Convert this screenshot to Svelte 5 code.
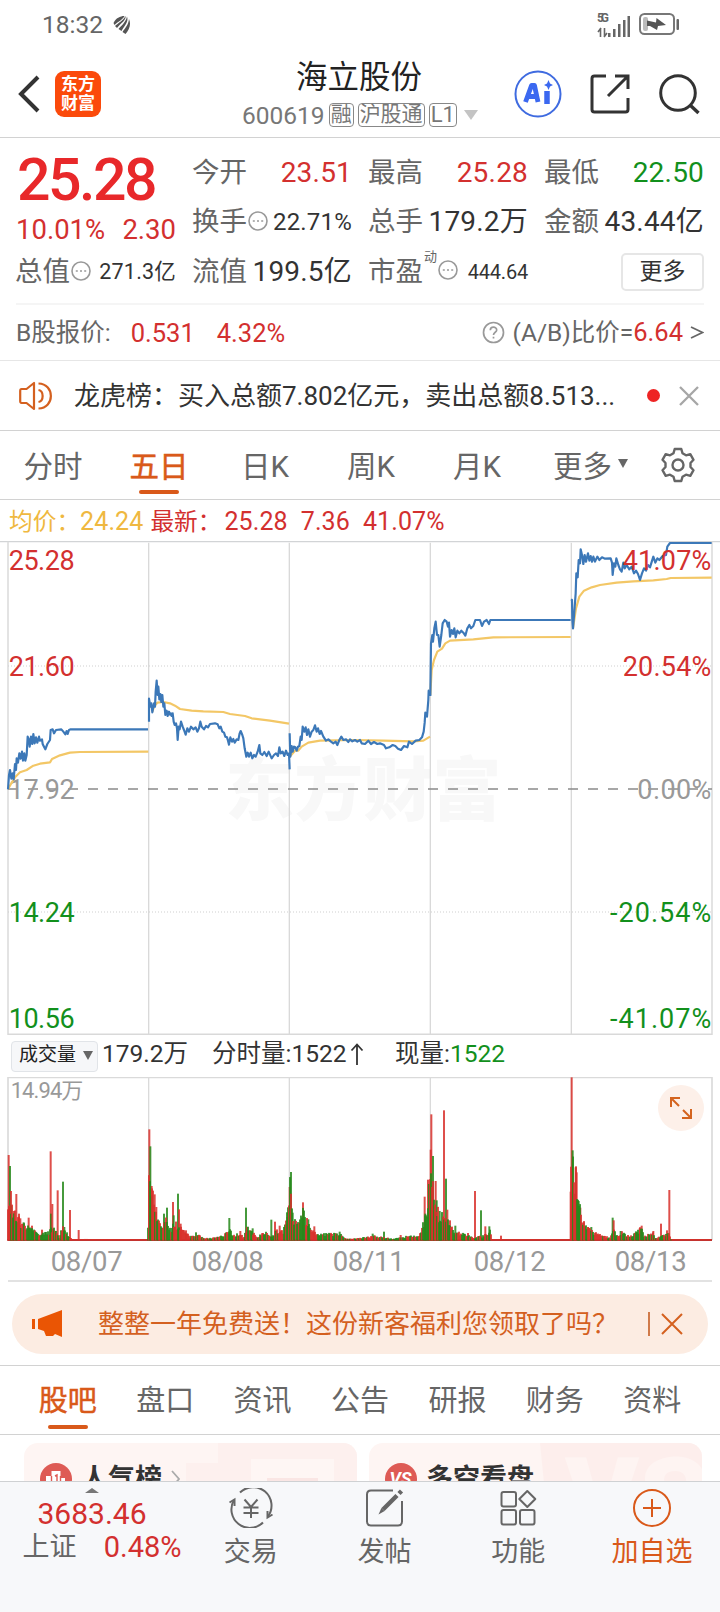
<script>
    // Шапка котировки
    const stats = [
        { label: "今开", value: "23.51", tone: "red" },
        { label: "最高", value: "25.28", tone: "red" },
        { label: "最低", value: "22.50", tone: "green" },
        { label: "换手", value: "22.71%", tip: true, size: "mid" },
        { label: "总手", value: "179.2万" },
        { label: "金额", value: "43.44亿" },
        { label: "流值", value: "199.5亿" },
        { label: "市盈", sup: "动", value: "444.64", tip: true, size: "small" },
    ];

    const periods = ["分时", "五日", "日K", "周K", "月K"];
    let period = "五日";

    const sections = ["股吧", "盘口", "资讯", "公告", "研报", "财务", "资料"];
    let section = "股吧";

    const dates = ["08/07", "08/08", "08/11", "08/12", "08/13"];

    let noticeOpen = true;
    let promoOpen = true;

    // Линии графика: координаты в третях пикселя
    const priceLines = [
        "24,748 27,705 30,690 34,716 38,700 41,718 45,672 48,690 50,655 54,668 58,640 62,656 66,635 69,662 73,640 76,662 80,645 83,590 87,600 89,620 93,590 97,612 100,582 104,610 108,592 112,608 117,590 120,602 126,598 128,612 132,620 136,628 142,612 150,600 152,570 158,568 162,580 168,570 184,568 190,575 196,583 200,573 203,582 207,570 212,568 444,568",
        "447,545 447,476 451,500 454,490 457,517 462,490 465,500 467,455 470,422 473,465 475,440 478,478 481,462 484,486 487,465 490,500 493,490 496,525 500,512 503,528 507,515 510,524 513,520 515,528 518,520 521,545 524,555 528,550 531,565 533,600 536,560 539,568 543,545 548,560 552,570 557,584 562,565 567,575 573,560 580,568 587,562 592,575 597,565 601,545 605,560 612,568 618,558 624,562 630,552 645,550 653,553 658,565 662,560 667,575 672,578 676,590 681,592 684,602 687,614 691,592 696,605 700,597 704,608 710,598 715,600 719,580 722,573 727,585 730,595 734,625 739,650 743,638 747,650 752,638 757,655 762,645 767,650 773,635 778,615 781,640 787,645 793,636 800,648 806,635 815,655 822,645 828,640 834,648 838,622 842,640 848,635 853,648 858,632 863,645 867,640 869,688",
        "869,580 871,650 875,618 878,635 882,620 886,622 890,632 894,620 898,618 902,590 905,600 908,560 913,575 917,562 921,585 925,568 930,590 935,575 940,570 945,556 950,575 954,565 959,582 963,573 970,590 978,602 985,598 992,604 1000,610 1007,605 1012,615 1018,600 1024,590 1030,600 1038,598 1045,606 1050,598 1057,604 1065,600 1072,605 1080,600 1085,610 1095,612 1105,602 1113,612 1122,606 1132,612 1140,610 1152,615 1158,625 1168,622 1178,615 1186,618 1194,626 1203,630 1212,618 1222,622 1227,605 1236,612 1247,602 1258,600 1266,592 1271,575 1274,548 1276,518 1281,530 1285,480 1286,452 1290,468",
        "1291,468 1293,310 1297,285 1299,305 1303,265 1307,245 1311,285 1315,285 1319,320 1324,285 1328,250 1334,240 1340,245 1344,260 1347,248 1350,290 1355,270 1359,282 1363,265 1367,292 1372,272 1378,280 1384,272 1390,278 1396,287 1402,265 1408,255 1413,265 1420,258 1426,240 1440,240 1446,258 1452,245 1460,240 1467,252 1471,240 1712,240",
        "1713,178 1716,180 1717,240 1719,265 1723,215 1727,160 1729,100 1733,112 1736,60 1740,70 1742,28 1746,45 1750,72 1754,45 1758,65 1764,40 1768,62 1772,48 1776,65 1780,50 1785,65 1792,50 1798,60 1806,52 1815,56 1832,55 1836,68 1838,105 1842,70 1846,80 1849,55 1855,75 1860,88 1865,95 1870,68 1874,85 1880,75 1888,88 1895,80 1902,100 1908,92 1914,102 1920,120 1926,100 1932,85 1938,92 1944,75 1950,82 1960,50 1966,68 1972,55 1978,60 1988,48 1998,45 2002,20 2010,9 2135,9",
    ];
    const avgLines = [
        "24,748 34,730 45,712 60,697 80,690 100,677 120,671 150,667 156,657 180,646 210,638 240,636 445,635",
        "457,515 463,498 472,488 490,486 510,490 525,497 540,507 575,512 610,514 670,516 690,522 735,528 755,535 810,542 867,551",
        "869,650 885,632 895,632 905,620 925,608 960,602 1060,600 1150,602 1240,604 1270,602 1290,590",
        "1291,465 1295,390 1302,360 1312,335 1326,326 1336,310 1350,302 1420,298 1480,292 1712,291",
        "1719,265 1728,205 1738,170 1752,152 1775,142 1800,135 1850,128 1900,124 1960,121 2000,117 2012,114 2135,113",
    ];
    const dayLines = [446, 868, 1291, 1714];

    const leftScale = [
        { text: "25.28", y: 90, tone: "red" },
        { text: "21.60", y: 407, tone: "red" },
        { text: "17.92", y: 776, tone: "gray" },
        { text: "14.24", y: 1145, tone: "green" },
        { text: "10.56", y: 1463, tone: "green" },
    ];
    const rightScale = [
        { text: "41.07%", y: 90, tone: "red", w: 266 },
        { text: "20.54%", y: 407, tone: "red", w: 266 },
        { text: "0.00%", y: 776, tone: "gray", w: 222 },
        { text: "-20.54%", y: 1145, tone: "green", w: 304 },
        { text: "-41.07%", y: 1463, tone: "green", w: 304 },
    ];

    // Огибающая мелкого объёма: [x, высота]
    const envelope = [
        [24, 90], [34, 100], [50, 85], [66, 55], [90, 38], [115, 22], [148, 26], [153, 40], [170, 32], [178, 4], [186, 45], [205, 18], [215, 4], [443, 3],
        [447, 200], [458, 150], [470, 85], [482, 48], [500, 75], [506, 30], [525, 55], [545, 35], [570, 14], [600, 16], [612, 6], [655, 10], [672, 18], [690, 38], [700, 16], [722, 24], [730, 6], [742, 42], [770, 12], [800, 26], [815, 10], [830, 35], [850, 30], [860, 80],
        [869, 190], [880, 75], [895, 50], [910, 95], [925, 50], [950, 20], [985, 22], [1020, 20], [1040, 5], [1070, 6], [1120, 14], [1180, 5], [1225, 14], [1258, 14], [1270, 60], [1284, 100],
        [1292, 260], [1302, 160], [1316, 80], [1330, 90], [1345, 60], [1362, 28], [1400, 18], [1420, 8], [1446, 14], [1470, 30], [1476, 3], [1710, 3],
        [1714, 270], [1733, 180], [1742, 80], [1760, 42], [1790, 22], [1830, 8], [1842, 40], [1850, 14], [1866, 26], [1890, 12], [1925, 40], [1932, 12], [1960, 25], [1966, 6], [2005, 24], [2014, 3], [2134, 3],
    ];
    // Крупные столбцы: [x, высота, цвет]
    const peaks = [
        [26, 256, "r"], [30, 223, "g"], [33, 148, "r"], [34, 104, "g"], [42, 88, "r"], [49, 139, "r"], [57, 80, "r"], [61, 66, "r"], [71, 54, "g"], [86, 68, "r"], [96, 44, "r"], [126, 32, "r"],
        [152, 267, "r"], [153, 80, "g"], [157, 109, "r"], [173, 150, "r"], [189, 176, "g"], [193, 40, "g"], [210, 91, "r"], [236, 31, "r"],
        [448, 333, "r"], [451, 282, "g"], [455, 163, "r"], [457, 135, "g"], [464, 138, "r"], [469, 100, "r"], [492, 80, "g"], [501, 98, "g"], [519, 115, "r"], [521, 75, "g"], [534, 140, "g"], [537, 93, "r"], [542, 50, "r"], [558, 30, "r"],
        [588, 24, "g"], [688, 67, "g"], [721, 28, "r"], [738, 98, "g"], [741, 40, "r"], [758, 36, "g"], [789, 22, "r"], [814, 62, "g"], [825, 56, "r"], [839, 44, "r"], [857, 48, "r"], [862, 70, "r"],
        [869, 160, "r"], [873, 205, "g"], [878, 83, "g"], [909, 114, "r"], [925, 63, "g"], [943, 42, "r"], [1019, 26, "g"], [1118, 20, "g"], [1152, 26, "g"], [1202, 16, "r"],
        [1274, 131, "r"], [1276, 80, "g"], [1284, 182, "r"], [1292, 272, "r"], [1294, 378, "r"], [1299, 253, "g"], [1307, 178, "r"], [1310, 120, "g"], [1319, 88, "g"], [1332, 390, "r"], [1338, 185, "g"], [1342, 92, "r"], [1350, 60, "r"], [1366, 44, "g"],
        [1393, 20, "g"], [1404, 22, "r"], [1425, 148, "r"], [1443, 90, "g"], [1456, 42, "r"], [1468, 42, "g"], [1503, 14, "r"],
        [1712, 146, "r"], [1715, 489, "r"], [1718, 270, "g"], [1727, 219, "r"], [1730, 204, "r"], [1736, 118, "g"], [1741, 98, "r"], [1751, 54, "r"], [1764, 40, "r"], [1774, 40, "g"],
        [1838, 68, "g"], [1841, 60, "r"], [1862, 28, "g"], [1910, 22, "r"], [1919, 36, "r"], [1925, 44, "r"], [1960, 28, "r"], [1983, 50, "r"], [2001, 30, "r"], [2008, 151, "r"],
    ];

    function buildVolume() {
        const bars = [];
        let seg = 0;
        for (let x = 24; x < 2134; x += 3) {
            while (seg < envelope.length - 2 && envelope[seg + 1][0] <= x) seg++;
            const [x0, h0] = envelope[seg];
            const [x1, h1] = envelope[seg + 1];
            const base = h0 + ((h1 - h0) * (x - x0)) / (x1 - x0);
            const k = Math.abs(Math.sin(x * 12.9898) * 43758.5453) % 1;
            const h = Math.max(3, base * (0.6 + 0.5 * k));
            const quiet = base < 4.5;
            bars.push([x, h, quiet || (k * 10) % 1 > 0.5 ? "r" : "g"]);
        }
        return bars;
    }

    const volume = [...peaks, ...buildVolume()];

    const actions = [
        { name: "交易", icon: "trade" },
        { name: "发帖", icon: "post" },
        { name: "功能", icon: "apps" },
        { name: "加自选", icon: "add" },
    ];
</script>

<div class="screen">
    <div class="status">
        <span class="clock">18:32</span>
        <svg class="leaf" width="18" height="19" viewBox="0 0 18 19" fill="#555">
            <path d="M0.500 8C3 3 7 1 11.500 1C10.500 4 6 6 1.500 10Z" />
            <path d="M12.500 1C13.500 5 8 8 4 13L2 11C5 8 10 6 12.500 1Z" />
            <path d="M14 1.500C16 7 11 11 8.500 16L5.500 14C8 11 13 7 14 1.500Z" />
            <path d="M16 4C18.500 10 16 15 12.500 19L9.500 17C12 13 15.500 10 16 4Z" />
        </svg>
        <svg class="signal" width="34" height="29" viewBox="0 0 34 29" fill="#666">
            <text x="0" y="12" font-size="12" font-weight="700" textLength="12">5G</text>
            <path d="M3.500 18v9M4 18l-3 4M7.500 18v9M7 27l3-4" stroke="#666" stroke-width="1.6" fill="none" />
            <rect x="11" y="23" width="2.500" height="4" />
            <rect x="16" y="19" width="2.500" height="8" />
            <rect x="21" y="14" width="2.500" height="13" />
            <rect x="26" y="10" width="2.500" height="17" />
            <rect x="30.500" y="6" width="2.500" height="21" />
        </svg>
        <svg width="41" height="22" viewBox="0 0 41 22">
            <rect x="1" y="1" width="34" height="20" rx="4.500" fill="none" stroke="#777" stroke-width="2" />
            <rect x="4" y="4" width="5" height="14" rx="2" fill="#bbb" />
            <path d="M8 7.500L17 9.500L17.500 5L27 12L19 13L18 17L11 13H8Z" fill="#555" />
            <rect x="37.500" y="6" width="2.500" height="11" rx="1" fill="#666" />
        </svg>
    </div>

    <header>
        <svg class="back" width="24" height="38" viewBox="0 0 24 38">
            <path d="M21 2L4 19L21 36" fill="none" stroke="#333" stroke-width="4" />
        </svg>
        <div class="logo"><span>东方</span><span>财富</span></div>
        <div class="title">
            <h1>海立股份</h1>
            <div class="code">
                <span>600619</span>
                <i>融</i><i>沪股通</i><i class="level">L1</i>
                <svg width="14" height="10" viewBox="0 0 14 10"><path d="M0 0H14L7 10Z" fill="#c4c4c4" /></svg>
            </div>
        </div>
        <svg width="48" height="48" viewBox="0 0 48 48">
            <circle cx="24" cy="24" r="22.500" fill="#fff" stroke="#3f6be0" stroke-width="2" />
            <path d="M11.500 32L17.500 15.500H20.500L24 32M14 26.500H23" fill="none" stroke="#3b68f0" stroke-width="4.800" stroke-linejoin="round" />
            <path d="M33 21V34" stroke="#3b68f0" stroke-width="5.500" />
            <path d="M34.500 10L36 13.500L39 15L36 16.500L34.500 20L33 16.500L30 15L33 13.500Z" fill="#3b68f0" />
        </svg>
        <svg class="share" width="40" height="40" viewBox="0 0 40 40" fill="none" stroke="#333" stroke-width="3">
            <path d="M16 2H4.500Q2 2 2 4.500V35.500Q2 38 4.500 38H35.500Q38 38 38 35.500V24" />
            <path d="M18 22L37 3M25 2H38V15" />
        </svg>
        <svg width="42" height="42" viewBox="0 0 42 42" fill="none" stroke="#333" stroke-width="3">
            <circle cx="20" cy="20" r="17.300" />
            <path d="M32 32L40.500 40" stroke-width="3.500" />
        </svg>
    </header>

    <div class="quote">
        <div class="main-quote">
            <div class="price">25.28</div>
            <div class="change red"><span>10.01%</span><span>2.30</span></div>
            <div class="stat cap">
                <span class="label">总值</span>
                <svg class="tip" width="20" height="20" viewBox="0 0 20 20"><circle cx="10" cy="10" r="9" /><path d="M4.800 10h2M9 10h2M13.200 10h2" /></svg>
                <b class="value mid2">271.3亿</b>
            </div>
        </div>
        <div class="stats">
            {#each stats as stat}
                <div class="stat">
                    <span class="label">{stat.label}</span>
                    {#if stat.sup}<sup>{stat.sup}</sup>{/if}
                    {#if stat.tip}
                        <svg class="tip" width="20" height="20" viewBox="0 0 20 20"><circle cx="10" cy="10" r="9" /><path d="M4.800 10h2M9 10h2M13.200 10h2" /></svg>
                    {/if}
                    <b class="value {stat.tone ?? ''} {stat.size ?? ''}">{stat.value}</b>
                </div>
            {/each}
            <div class="stat"><button class="more">更多</button></div>
        </div>
    </div>

    <div class="b-share">
        <span>B股报价:</span>
        <b class="red first">0.531</b>
        <b class="red">4.32%</b>
        <div class="ratio">
            <svg width="23" height="23" viewBox="0 0 23 23" fill="none" stroke="#999" stroke-width="1.700">
                <circle cx="11.500" cy="11.500" r="10" />
                <path d="M8.300 9.200C8.300 5.200 14.700 5.200 14.700 9C14.700 11.300 11.500 11.200 11.500 14M11.500 15.800V17.600" />
            </svg>
            <span>(A/B)比价=<b class="red">6.64</b></span>
            <svg class="gt" width="14" height="13" viewBox="0 0 14 13"><path d="M1 1L12.500 6.500L1 12" fill="none" stroke="#666" stroke-width="1.800" /></svg>
        </div>
    </div>

    <div class="notice">
        {#if noticeOpen}
            <svg width="34" height="30" viewBox="0 0 34 30" fill="none" stroke="#d4601f" stroke-width="2.200">
                <path d="M15 2V28L7.500 22H2.500Q1.200 22 1.200 20V10Q1.200 8 2.500 8H7.500Z" stroke-linejoin="round" />
                <path d="M19.500 9C25 10 25 20 19.500 21M19.500 2.500C36 3 36 27 19.500 27.500" />
            </svg>
            <p>龙虎榜：买入总额7.802亿元，卖出总额8.513...</p>
            <span class="dot"></span>
            <button class="plain" aria-label="关闭" on:click={() => (noticeOpen = false)}>
                <svg width="20" height="20" viewBox="0 0 20 20"><path d="M1 1L19 19M19 1L1 19" stroke="#a6a6a6" stroke-width="2.300" /></svg>
            </button>
        {/if}
    </div>

    <nav class="periods">
        {#each periods as item}
            <button class:active={item === period} on:click={() => (period = item)}>{item}</button>
        {/each}
        <button class="drop">更多<svg width="10" height="9" viewBox="0 0 10 9"><path d="M0 0H10L5 9Z" fill="#666" /></svg></button>
        <svg class="gear" width="36" height="36" viewBox="0 0 36 36" fill="none" stroke="#666" stroke-width="2.400" stroke-linejoin="round">
            <path d="M14.700 2H21.300L22.500 6.300L26 8.300L30.300 7.200L33.500 12.800L30.500 16V20L33.500 23.200L30.300 28.800L26 27.700L22.500 29.700L21.300 34H14.700L13.500 29.700L10 27.700L5.700 28.800L2.500 23.200L5.500 20V16L2.500 12.800L5.700 7.200L10 8.300L13.500 6.300Z" />
            <circle cx="18" cy="18" r="5.500" />
        </svg>
    </nav>

    <div class="legend">
        <span class="avg">均价：<b>24.24</b></span>
        <span class="red latest">最新：<b>25.28</b><b>7.36</b><b>41.07%</b></span>
    </div>

    <svg class="chart" width="720" height="495" viewBox="0 0 2160 1485">
        <text class="mark" x="676" y="786" textLength="828">东方财富</text>
        <g stroke="#d9d9d9" stroke-width="4" fill="none">
            <path d="M0 5H2160" stroke="#d2d4d6" />
            <path d="M24 5V1485M2136 5V1485" stroke="#dedede" stroke-width="5" />
            {#each dayLines as x}<path d="M{x} 8V1485" />{/each}
            <path d="M24 1483H2136" stroke-width="5" />
            <path d="M24 378H2136M24 1116H2136" stroke="#cfcfcf" stroke-width="3" stroke-dasharray="3 6" />
        </g>
        <path d="M24 747H2136" stroke="#8a8a8a" stroke-width="5" stroke-dasharray="30 30" />
        {#each leftScale as mark}
            <text class="scale {mark.tone}" x="26" y={mark.y} textLength="198">{mark.text}</text>
        {/each}
        {#each avgLines as points}<polyline {points} stroke="#f3c766" />{/each}
        {#each priceLines as points}<polyline {points} stroke="#3c78b8" />{/each}
        {#each rightScale as mark}
            <text class="scale {mark.tone}" x="2134" y={mark.y} text-anchor="end" textLength={mark.w}>{mark.text}</text>
        {/each}
    </svg>

    <div class="volume-head">
        <button class="select">成交量<svg width="10" height="9" viewBox="0 0 10 9"><path d="M0 0H10L5 9Z" fill="#666" /></svg></button>
        <span class="total">179.2万</span>
        <span class="minute">分时量:1522<svg width="14" height="22" viewBox="0 0 14 22"><path d="M7 22V2M1.500 7.500L7 1.500L12.500 7.500" fill="none" stroke="#333" stroke-width="1.800" /></svg></span>
        <span>现量:<b class="green">1522</b></span>
    </div>

    <div class="volume">
        <svg width="720" height="165" viewBox="0 291 2160 495">
            <g stroke="#dadada" stroke-width="4">
                <path d="M24 293H2136" />
                <path d="M24 291V780M2136 291V780" stroke-width="5" />
                {#each dayLines as x}<path d="M{x} 291V780" />{/each}
            </g>
            <path d="M22 780H2136" stroke="#b03a34" stroke-width="6" />
            {#each volume as [x, h, tone]}
                <rect x={x - 3} y={781 - h} width="6" height={h} fill={tone === "r" ? "#d8302c" : "#26881a"} opacity="0.85" />
            {/each}
            <text class="max" x="32" y="354" textLength="218">14.94万</text>
        </svg>
        <button class="expand" aria-label="全屏">
            <svg width="24" height="24" viewBox="0 0 24 24" fill="none" stroke="#d4641f" stroke-width="2">
                <path d="M2 11V2H11M2 2L10 10M22 13V22H13M22 22L14 14" />
            </svg>
        </button>
    </div>
    <div class="dates">
        {#each dates as date}<span>{date}</span>{/each}
    </div>

    <div class="promo-wrap">
        {#if promoOpen}
            <div class="promo">
                <svg width="31" height="28" viewBox="0 0 31 28" fill="#ea5504">
                    <rect x="0" y="9" width="3" height="10" />
                    <path d="M6 9L30 0V27L23 24L21 26H14L12 21L6 19Z" />
                </svg>
                <p>整整一年免费送！这份新客福利您领取了吗？</p>
                <span class="bar"></span>
                <button class="plain" aria-label="关闭" on:click={() => (promoOpen = false)}>
                    <svg width="22" height="22" viewBox="0 0 22 22"><path d="M1 1L21 21M21 1L1 21" stroke="#d4601f" stroke-width="2" /></svg>
                </button>
            </div>
        {/if}
    </div>

    <nav class="sections">
        {#each sections as item}
            <button class:active={item === section} on:click={() => (section = item)}>{item}</button>
        {/each}
    </nav>

    <div class="cards">
        <div class="card">
            <svg class="deco" width="333" height="70" viewBox="0 0 333 70">
                <path d="M162 70V20H194V0H333V70Z" fill="#fdf0ee" />
                <path d="M227 16H310V70H227Z" fill="#fef6f4" />
                <path d="M243 35H294V70H243Z" fill="#fae6e4" />
            </svg>
            <svg width="32" height="32" viewBox="0 0 32 32">
                <circle cx="16" cy="16" r="16" fill="#de5b55" />
                <path d="M6 24V13H11.500V8H20.500V15H25V24Z" fill="#fff" />
                <path d="M11.500 13V24M20.500 13V24M15 13L17 12V19" fill="none" stroke="#de5b55" stroke-width="1.400" />
            </svg>
            <strong>人气榜</strong>
            <svg class="arrow" width="10" height="20" viewBox="0 0 10 20"><path d="M1 2L8 10L1 18" fill="none" stroke="#aaa" stroke-width="1.800" /></svg>
        </div>
        <div class="card">
            <svg class="deco" width="333" height="70" viewBox="0 0 333 70">
                <path d="M171 0H333V70H178Z" fill="#fdeeec" />
                <text x="196" y="94" font-size="112" font-weight="900" fill="#fef4f2">VS</text>
            </svg>
            <svg width="32" height="32" viewBox="0 0 32 32">
                <circle cx="16" cy="16" r="16" fill="#de5b55" />
                <text x="15.500" y="21.500" text-anchor="middle" font-size="18" font-weight="700" font-style="italic" fill="#fff">VS</text>
            </svg>
            <strong>多空看盘</strong>
        </div>
    </div>

    <footer>
        <div class="index">
            <svg width="14" height="5" viewBox="0 0 14 5"><path d="M0 5L7 0L14 5Z" fill="#777" /></svg>
            <b class="red points">3683.46</b>
            <div><span>上证</span><b class="red">0.48%</b></div>
        </div>
        {#each actions as action}
            <div class="action" class:hot={action.icon === "add"}>
                <svg width="44" height="40" viewBox="0 0 44 40" fill="none" stroke="currentColor" stroke-width="2">
                    {#if action.icon === "trade"}
                        <path d="M11 4.500A18.500 18.500 0 0 1 39 28.500M34 34.500A18.500 18.500 0 0 1 5 12" />
                        <path d="M0.500 14.500L5.500 11.500V18M43.500 26.500L38.500 29.500V23" />
                        <path d="M15.500 11.500L22 19L28.500 11.500M22 19V30M14.500 19.500H29.500M14.500 25H29.500" />
                    {:else if action.icon === "post"}
                        <path d="M30 2.500H8Q4 2.500 4 6.500V33.500Q4 37.500 8 37.500H35Q39 37.500 39 33.500V13" />
                        <path d="M34 7.500L20 21.500" stroke-width="4.500" />
                        <path d="M15.500 26.500L18.400 19.900L21.600 23.100Z" fill="currentColor" stroke="none" />
                        <path d="M36 5.500L38.500 3" stroke-width="4.500" />
                    {:else if action.icon === "apps"}
                        <rect x="5.500" y="4" width="14.500" height="14.500" rx="2" />
                        <rect x="5.500" y="22" width="14.500" height="14.500" rx="2" />
                        <rect x="24" y="22" width="14.500" height="14.500" rx="2" />
                        <path d="M31.300 3L39.300 11L31.300 19L23.300 11Z" stroke-linejoin="round" />
                    {:else}
                        <circle cx="22" cy="20" r="18" />
                        <path d="M22 11V29M13 20H31" />
                    {/if}
                </svg>
                <span>{action.name}</span>
            </div>
        {/each}
    </footer>
</div>

<style>
    :global(body) {
        background: #fff;
    }

    .screen {
        width: 720px;
        height: 1612px;
        overflow: hidden;
        display: flex;
        flex-direction: column;
        font-family: Roboto, "Noto Sans CJK SC", sans-serif;
        color: #333;
        white-space: nowrap;
        background: #fff;
    }

    .screen > * {
        flex: none;
        box-sizing: border-box;
    }

    svg {
        display: block;
        flex: none;
    }

    b, i {
        font-weight: 400;
        font-style: normal;
    }

    p, h1 {
        margin: 0;
        font-weight: 400;
    }

    button {
        font: inherit;
        color: inherit;
        padding: 0;
        margin: 0;
        border: none;
        background: none;
    }

    .red {
        color: #d3302f;
        fill: #d3302f;
    }

    .green {
        color: #12901c;
        fill: #12901c;
    }

    .gray {
        fill: #999;
    }

    /* Статус-бар */
    .status {
        height: 48px;
        display: flex;
        align-items: center;
        padding: 0 40px 0 42px;
    }

    .clock {
        font-size: 24.5px;
        color: #666;
    }

    .leaf {
        margin-left: 10px;
    }

    .signal {
        margin-left: auto;
        margin-right: 8px;
    }

    /* Шапка */
    header {
        height: 90px;
        display: flex;
        align-items: center;
        padding: 2px 20px 0 17px;
        border-bottom: 1px solid #d2d2d2;
    }

    .logo {
        width: 46px;
        height: 46px;
        margin-left: 14px;
        border-radius: 9px;
        background: #fb4a0b;
        color: #fff;
        font-size: 17px;
        font-weight: 700;
        line-height: 19px;
        display: flex;
        flex-direction: column;
        align-items: center;
        justify-content: center;
    }

    .title {
        width: 240px;
        margin: 0 auto 0 141px;
        padding-top: 5px;
    }

    .title h1 {
        margin-left: 54px;
        font-size: 31.5px;
        line-height: 38px;
        color: #222;
    }

    .code {
        display: flex;
        align-items: center;
        gap: 4px;
        height: 36px;
        font-size: 24.5px;
        color: #777;
    }

    .code i {
        height: 22px;
        padding: 0 1px;
        border: 1.5px solid #888;
        border-radius: 4px;
        font-size: 21px;
        line-height: 21px;
    }

    .code .level {
        padding: 0 1px;
        font-size: 22px;
    }

    .code svg {
        margin-left: 3px;
    }

    .share {
        margin: 0 28px;
    }

    /* Котировка */
    .quote {
        display: flex;
        gap: 17px;
        height: 167px;
        margin: 0 16px;
        border-bottom: 2px solid #f5f5f5;
    }

    .main-quote {
        width: 160px;
        padding-top: 8px;
    }

    .price {
        height: 68px;
        line-height: 68px;
        font-size: 59px;
        font-weight: 500;
        letter-spacing: -2.5px;
        color: #e8282a;
        padding-left: 1px;
    }

    .change {
        display: flex;
        justify-content: space-between;
        height: 32px;
        line-height: 32px;
        font-size: 27.5px;
    }

    .cap {
        height: 52px;
    }

    .stats {
        flex: 1;
        display: grid;
        grid-template-columns: repeat(3, 159px);
        grid-template-rows: repeat(3, 49.5px);
        justify-content: space-between;
        padding-top: 10px;
    }

    .stat {
        display: flex;
        align-items: center;
    }

    .label {
        font-size: 27.5px;
        line-height: 40px;
        margin-left: -1px;
        color: #666;
    }

    .value {
        margin-left: auto;
        font-size: 28px;
        line-height: 40px;
        letter-spacing: 0.2px;
    }

    .value.mid {
        font-size: 24px;
    }

    .value.mid2 {
        font-size: 21.5px;
    }

    .value.small {
        font-size: 20px;
        letter-spacing: -0.2px;
    }

    .tip {
        margin-left: 1px;
        margin-bottom: 3px;
        fill: none;
        stroke: #999;
        stroke-width: 1.6;
    }

    sup {
        align-self: flex-start;
        font-size: 13px;
        line-height: 20px;
        margin-left: 1px;
        color: #666;
    }

    .more {
        width: 83px;
        height: 38px;
        margin-left: auto;
        border: 2px solid #e6e6e6;
        border-radius: 5px;
        font-size: 23px;
        line-height: 31px;
    }

    .b-share {
        display: flex;
        align-items: center;
        height: 56px;
        padding: 0 16px;
        border-bottom: 1px solid #e6e6e6;
        font-size: 24.5px;
        color: #666;
    }

    .b-share > span, .ratio span {
        margin-bottom: 5px;
    }

    .b-share b {
        font-size: 25.5px;
        margin-right: 22px;
    }

    .b-share .first {
        margin-left: 20px;
    }

    .ratio {
        display: flex;
        align-items: center;
        gap: 8px;
        margin-left: auto;
    }

    .b-share .ratio b {
        margin: 0;
    }

    .gt {
        margin-left: -1px;
    }

    .notice {
        display: flex;
        align-items: center;
        height: 70px;
        padding: 0 21px 0 19px;
        border-bottom: 1px solid #d2d2d2;
        font-size: 26px;
    }

    .notice p {
        flex: 1;
        margin-left: 21px;
        margin-bottom: 4px;
    }

    .dot {
        width: 13px;
        height: 13px;
        margin-right: 19px;
        border-radius: 50%;
        background: #ee2424;
    }

    /* Вкладки */
    .periods {
        display: flex;
        align-items: center;
        height: 69px;
        padding: 0 24px 0 0;
        border-bottom: 1px solid #d2d2d2;
        font-size: 29.5px;
        color: #666;
    }

    .periods button {
        position: relative;
        width: 106px;
        height: 68px;
        padding-bottom: 3px;
    }

    .periods .drop {
        display: flex;
        align-items: center;
        justify-content: flex-end;
        gap: 6px;
        width: 98px;
        margin-right: auto;
    }

    .active {
        position: relative;
        color: #d9591a;
        -webkit-text-stroke: 0.5px #d9591a;
    }

    .active::after {
        content: "";
        position: absolute;
        left: calc(50% - 20px);
        bottom: 5px;
        width: 40px;
        height: 4px;
        border-radius: 2px;
        background: #d9591a;
    }

    .legend {
        display: flex;
        align-items: center;
        height: 40px;
        padding: 0 0 1px 9px;
        font-size: 23.7px;
    }

    .legend b {
        font-size: 25px;
        letter-spacing: 0.1px;
    }

    .latest b {
        margin-left: 13px;
    }

    .latest b:first-child {
        margin-left: 3px;
    }

    .avg {
        color: #efb840;
    }

    .latest {
        margin-left: 7px;
    }

    /* Графики */
    polyline {
        fill: none;
        stroke-width: 6.5;
        stroke-linejoin: round;
    }

    .scale {
        font-size: 81px;
    }

    .mark {
        font-size: 207px;
        font-weight: 900;
        fill: #f8f8f8;
        transform: translateY(38px);
    }

    .volume-head {
        display: flex;
        align-items: center;
        height: 42px;
        padding: 0 0 0 11px;
        font-size: 24.5px;
        line-height: 34px;
    }

    .volume-head > span {
        margin-bottom: 4px;
    }

    .select {
        display: flex;
        align-items: center;
        gap: 7px;
        box-sizing: border-box;
        width: 87px;
        height: 31px;
        padding: 0 0 2px 7px;
        border: 1.5px solid #e1e4e8;
        border-radius: 4px;
        background: #f6f7f9;
        font-size: 19px;
        line-height: 28px;
        color: #222;
    }

    .total {
        margin-left: 4px;
        width: 110px;
    }

    .minute {
        display: flex;
        align-items: center;
        gap: 3px;
        width: 183px;
    }

    .volume {
        position: relative;
        height: 165px;
    }

    .max {
        font-size: 66px;
        fill: #999;
    }

    .expand {
        position: absolute;
        top: 8px;
        right: 16px;
        display: flex;
        align-items: center;
        justify-content: center;
        width: 46px;
        height: 46px;
        border-radius: 50%;
        background: #fdf0e9;
    }

    .dates {
        display: flex;
        height: 40px;
        margin: 0 8px;
        padding-left: 8px;
        border-bottom: 2px solid #e2e2e2;
        font-size: 27.5px;
        letter-spacing: -0.3px;
        line-height: 40px;
        color: #999;
    }

    .dates span {
        width: 141px;
        text-align: center;
        flex: none;
    }

    .promo-wrap {
        height: 84px;
        padding: 12px 12px 0;
        border-bottom: 1px solid #d2d2d2;
    }

    .promo {
        display: flex;
        align-items: center;
        height: 60px;
        padding: 0 25px 0 20px;
        box-sizing: border-box;
        border-radius: 30px;
        background: #fcece2;
        font-size: 26px;
        color: #d4601f;
    }

    .promo p {
        width: 550px;
        margin-left: 35px;
        margin-bottom: 5px;
    }

    .bar {
        width: 2px;
        height: 24px;
        margin-right: 11px;
        background: #d07a4a;
    }

    .sections {
        display: flex;
        align-items: center;
        height: 69px;
        padding: 0 19px;
        border-bottom: 1px solid #d2d2d2;
        font-size: 29px;
        color: #666;
    }

    .sections button {
        width: 97.5px;
        height: 68px;
        padding-bottom: 4px;
    }

    .cards {
        display: flex;
        gap: 12px;
        height: 46px;
        padding: 8px 0 0 24px;
        overflow: hidden;
    }

    .card {
        position: relative;
        display: flex;
        align-items: center;
        width: 333px;
        height: 72px;
        padding-left: 16px;
        box-sizing: border-box;
        border-radius: 14px;
        overflow: hidden;
        background: #fef5f3;
        font-size: 27px;
    }

    .card > :not(.deco) {
        z-index: 1;
    }

    .card strong {
        margin-left: 9px;
        margin-bottom: 5px;
        font-weight: 700;
    }

    .arrow {
        margin-left: 9px;
    }

    .deco {
        position: absolute;
        left: 0;
        top: 0;
    }

    /* Нижняя панель */
    footer {
        display: flex;
        height: 131px;
        border-top: 1px solid #cfd1d3;
        background: #f7f8fa;
        font-size: 27px;
        color: #666;
    }

    .index {
        width: 184px;
        padding-top: 6px;
        display: flex;
        flex-direction: column;
        align-items: center;
    }

    .points {
        font-size: 30px;
        line-height: 36px;
        margin-top: 3px;
    }

    .index div {
        display: flex;
        align-items: center;
        justify-content: space-between;
        width: 159px;
        height: 31px;
        margin-left: 20px;
        line-height: 31px;
    }

    .index div b {
        font-size: 29px;
    }

    .action {
        width: 133.7px;
        padding-top: 6px;
        display: flex;
        flex-direction: column;
        align-items: center;
        line-height: 40px;
    }

    .action span {
        margin-top: 4px;
    }

    .hot {
        color: #d9591a;
    }
</style>
